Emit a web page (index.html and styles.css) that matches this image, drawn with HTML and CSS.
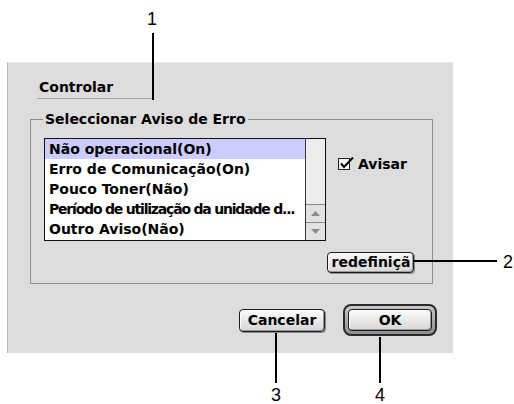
FILE: index.html
```html
<!DOCTYPE html>
<html>
<head>
<meta charset="utf-8">
<link rel="stylesheet" href="styles.css">
</head>
<body>
<div class="stage">
  <div class="panel">
    <div class="heading">Controlar</div>
    <fieldset class="group">
      <legend>Seleccionar Aviso de Erro</legend>
      <div class="group-row">
        <div class="listbox">
          <ul class="items">
            <li class="sel">Não operacional(On)</li>
            <li>Erro de Comunicação(On)</li>
            <li>Pouco Toner(Não)</li>
            <li class="narrow">Período de utilização da unidade d...</li>
            <li>Outro Aviso(Não)</li>
          </ul>
          <div class="scrollbar">
            <div class="track"></div>
            <div class="arrow"><svg width="9" height="5" viewBox="0 0 9 5"><path d="M0 5 L4.5 0 L9 5 Z" fill="#8a8a8a"/></svg></div>
            <div class="arrow"><svg width="9" height="5" viewBox="0 0 9 5"><path d="M0 0 L4.5 5 L9 0 Z" fill="#8a8a8a"/></svg></div>
          </div>
        </div>
        <label class="check">
          <svg class="box" width="17" height="14" viewBox="0 0 17 14"><rect x="0.5" y="1.5" width="11" height="11" fill="#f4f4f4" stroke="#222"/><path d="M3 6.5 L6 10 L15 0.5" fill="none" stroke="#000" stroke-width="2"/></svg>
          <span>Avisar</span>
        </label>
      </div>
      <div class="reset-row"><button class="btn reset">redefiniçã</button></div>
    </fieldset>
    <div class="actions">
      <button class="btn cancel">Cancelar</button>
      <span class="default-ring"><button class="btn ok">OK</button></span>
    </div>
  </div>

  <div class="callout-num n1">1</div>
  <div class="callout-line l1"></div>
  <div class="callout-line l2"></div>
  <div class="callout-num n2">2</div>
  <div class="callout-line l3"></div>
  <div class="callout-num n3">3</div>
  <div class="callout-line l4"></div>
  <div class="callout-num n4">4</div>
</div>
</body>
</html>
```

FILE: styles.css
```css
html, body {
  margin: 0;
  padding: 0;
  background: #ffffff;
}

.stage {
  position: relative;
  width: 514px;
  height: 404px;
  overflow: hidden;
  font-family: "DejaVu Sans", "Liberation Sans", sans-serif;
  font-weight: bold;
  font-size: 14px;
  letter-spacing: 0;
  color: #000;
}

.panel {
  box-sizing: border-box;
  margin: 62px 0 0 7px;
  width: 446px;
  height: 291px;
  background: #dddddd;
  border-left: 1px solid #b8b8b8;
  border-top: 1px solid #e9e9e9;
  padding-top: 14px;
}

.heading {
  box-sizing: border-box;
  margin-left: 29px;
  width: 117px;
  height: 22px;
  line-height: 21px;
  padding-left: 2px;
  border-bottom: 1px solid #a2a2a2;
}

.group {
  box-sizing: border-box;
  margin: 12px 0 0 22px;
  width: 403px;
  border: 1px solid #8f8f8f;
  padding: 11px 18px 10px 13px;
  min-width: 0;
}

.group legend {
  padding: 0 2px;
  margin-left: -1px;
  line-height: 16px;
}

.group-row {
  display: flex;
  align-items: flex-start;
}

.listbox {
  box-sizing: border-box;
  display: flex;
  width: 282px;
  height: 103px;
  border: 1px solid #111;
  background: #fff;
}

.items {
  list-style: none;
  margin: 0;
  padding: 0;
  flex: 1;
  min-width: 0;
  overflow: hidden;
}

.items li {
  height: 20px;
  line-height: 20px;
  padding-left: 4px;
  white-space: nowrap;
}

.items li.sel {
  background: #ccccff;
}

.items li.narrow {
  letter-spacing: -1.2px;
}

.scrollbar {
  width: 19px;
  border-left: 1px solid #333;
  display: flex;
  flex-direction: column;
  background: #eeeeee;
}

.track {
  flex: 1;
  background: #ececec;
}

.arrow {
  box-sizing: border-box;
  height: 18px;
  border-top: 1px solid #8a8a8a;
  background: #e2e2e2;
  display: flex;
  align-items: center;
  justify-content: center;
}

.check {
  display: flex;
  align-items: center;
  margin: 18px 0 0 12px;
  gap: 3px;
}

.check .box {
  display: block;
}

.reset-row {
  display: flex;
  justify-content: flex-end;
  margin-top: 11px;
}

.btn {
  box-sizing: border-box;
  font-family: "DejaVu Sans", "Liberation Sans", sans-serif;
  font-weight: bold;
  font-size: 14px;
  letter-spacing: 0;
  color: #000;
  margin: 0;
  padding: 0;
  border: 1px solid #1c1c1c;
  border-radius: 4px;
  background: linear-gradient(#fbfbfb, #d6d6d6);
  box-shadow: inset -1px -1px 0 #9a9a9a, inset 1px 1px 0 #ffffff, 1px 1px 0 #8c8c8c;
  text-align: center;
  white-space: nowrap;
  overflow: hidden;
}

.reset {
  width: 87px;
  height: 21px;
  line-height: 19px;
  padding-left: 1px;
}

.actions {
  display: flex;
  justify-content: flex-end;
  align-items: center;
  gap: 18px;
  margin-top: 20px;
  padding-right: 16px;
}

.cancel {
  width: 86px;
  height: 23px;
  line-height: 21px;
}

.default-ring {
  box-sizing: border-box;
  display: flex;
  width: 94px;
  height: 32px;
  padding: 3px;
  border: 2px solid #2a2a2a;
  border-radius: 8px;
  background: linear-gradient(#c8c8c8, #8e8e8e);
}

.ok {
  width: 100%;
  height: 100%;
  line-height: 20px;
  box-shadow: inset -1px -1px 0 #9a9a9a, inset 1px 1px 0 #ffffff;
}

.callout-num {
  position: absolute;
  width: 20px;
  height: 18px;
  text-align: center;
  font-family: "Liberation Sans", Arial, sans-serif;
  font-weight: normal;
  font-size: 18px;
  line-height: 18px;
  letter-spacing: 0;
}

.callout-line {
  position: absolute;
  background: #000;
}

.n1 { left: 142px; top: 10px; }
.l1 { left: 152px; top: 33px; width: 2px; height: 67px; }
.l2 { left: 413px; top: 260px; width: 84px; height: 2px; }
.n2 { left: 498px; top: 253px; }
.l3 { left: 275px; top: 333px; width: 2px; height: 50px; }
.n3 { left: 266px; top: 386px; }
.l4 { left: 379px; top: 337px; width: 2px; height: 46px; }
.n4 { left: 370px; top: 386px; }
```
